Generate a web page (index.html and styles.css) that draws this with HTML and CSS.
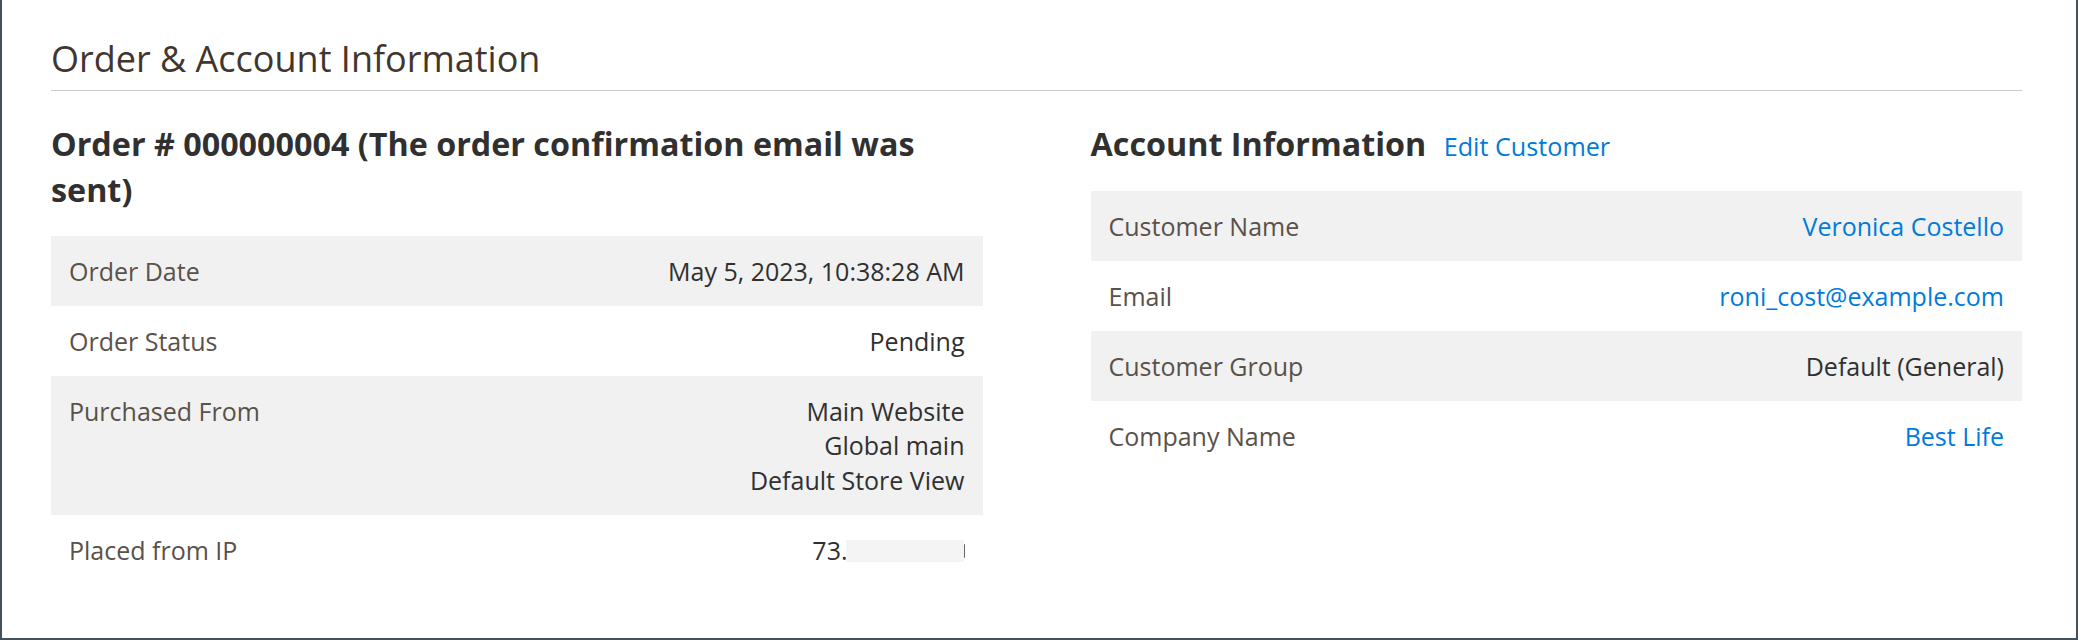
FILE: index.html
```html
<!DOCTYPE html>
<html lang="en">
<head>
<meta charset="utf-8">
<title>Order &amp; Account Information</title>
<link rel="stylesheet" href="styles.css">
</head>
<body>
<div class="frame">
  <section class="section">
    <h1 class="section-title">Order &amp; Account Information</h1>
    <div class="columns">
      <div class="column">
        <h2 class="item-title">Order # 000000004 (The order confirmation email was sent)</h2>
        <table class="info-table">
          <tbody>
            <tr><th>Order Date</th><td>May 5, 2023, 10:38:28 AM</td></tr>
            <tr><th>Order Status</th><td>Pending</td></tr>
            <tr><th>Purchased From</th><td>Main Website<br>Global main<br>Default Store View</td></tr>
            <tr><th>Placed from IP</th><td>73.<span class="redact"></span><span class="sliver"></span></td></tr>
          </tbody>
        </table>
      </div>
      <div class="column">
        <h2 class="item-title item-title--with-link">Account Information <a class="title-link" href="#">Edit Customer</a></h2>
        <table class="info-table">
          <tbody>
            <tr><th>Customer Name</th><td><a class="link" href="#">Veronica Costello</a></td></tr>
            <tr><th>Email</th><td><a class="link" href="#">roni_cost@example.com</a></td></tr>
            <tr><th>Customer Group</th><td>Default (General)</td></tr>
            <tr><th>Company Name</th><td><a class="link" href="#">Best Life</a></td></tr>
          </tbody>
        </table>
      </div>
    </div>
  </section>
</div>
</body>
</html>
```

FILE: styles.css
```css
html, body {
  margin: 0;
  padding: 0;
  background: #ffffff;
}

body {
  font-family: "Open Sans", "Liberation Sans", sans-serif;
  color: #303030;
}

.frame {
  box-sizing: border-box;
  height: 640px;
  border-left: 2px solid #41525c;
  border-right: 2px solid #41525c;
  border-bottom: 2px solid #41525c;
  padding: 37px 54px 0 49px;
}

.section-title {
  margin: 0;
  font-size: 36px;
  line-height: 43px;
  font-weight: 400;
  color: #41362f;
  padding-bottom: 10px;
  border-bottom: 1px solid #cccccc;
}

.columns {
  display: grid;
  grid-template-columns: 1fr 1fr;
  column-gap: 108px;
  margin-top: 29px;
}

.item-title {
  margin: 0 0 24px;
  font-size: 32.3px;
  line-height: 46px;
  font-weight: 700;
  color: #303030;
}

.item-title--with-link {
  margin-bottom: 22px;
}

.title-link {
  font-size: 25.2px;
  font-weight: 400;
  color: #007bdb;
  text-decoration: none;
  margin-left: 9px;
}

.info-table {
  width: 100%;
  border-collapse: collapse;
  font-size: 25px;
  line-height: 34.5px;
}

.info-table tr:nth-child(odd) {
  background: #f1f1f1;
}

.info-table th {
  text-align: left;
  font-weight: 400;
  color: #5a514a;
  padding: 17.75px 18px;
  vertical-align: top;
}

.info-table td {
  text-align: right;
  color: #303030;
  padding: 17.75px 18px;
  vertical-align: top;
}

.link {
  color: #007bdb;
  text-decoration: none;
}

.redact {
  display: inline-block;
  width: 118px;
  height: 22px;
  margin-left: -2px;
  background: #f4f4f4;
  vertical-align: -2px;
}

.sliver {
  display: inline-block;
  width: 0;
  height: 14px;
  border-right: 1.5px solid #666666;
  border-radius: 0 8px 8px 0;
  vertical-align: 2px;
}
```
